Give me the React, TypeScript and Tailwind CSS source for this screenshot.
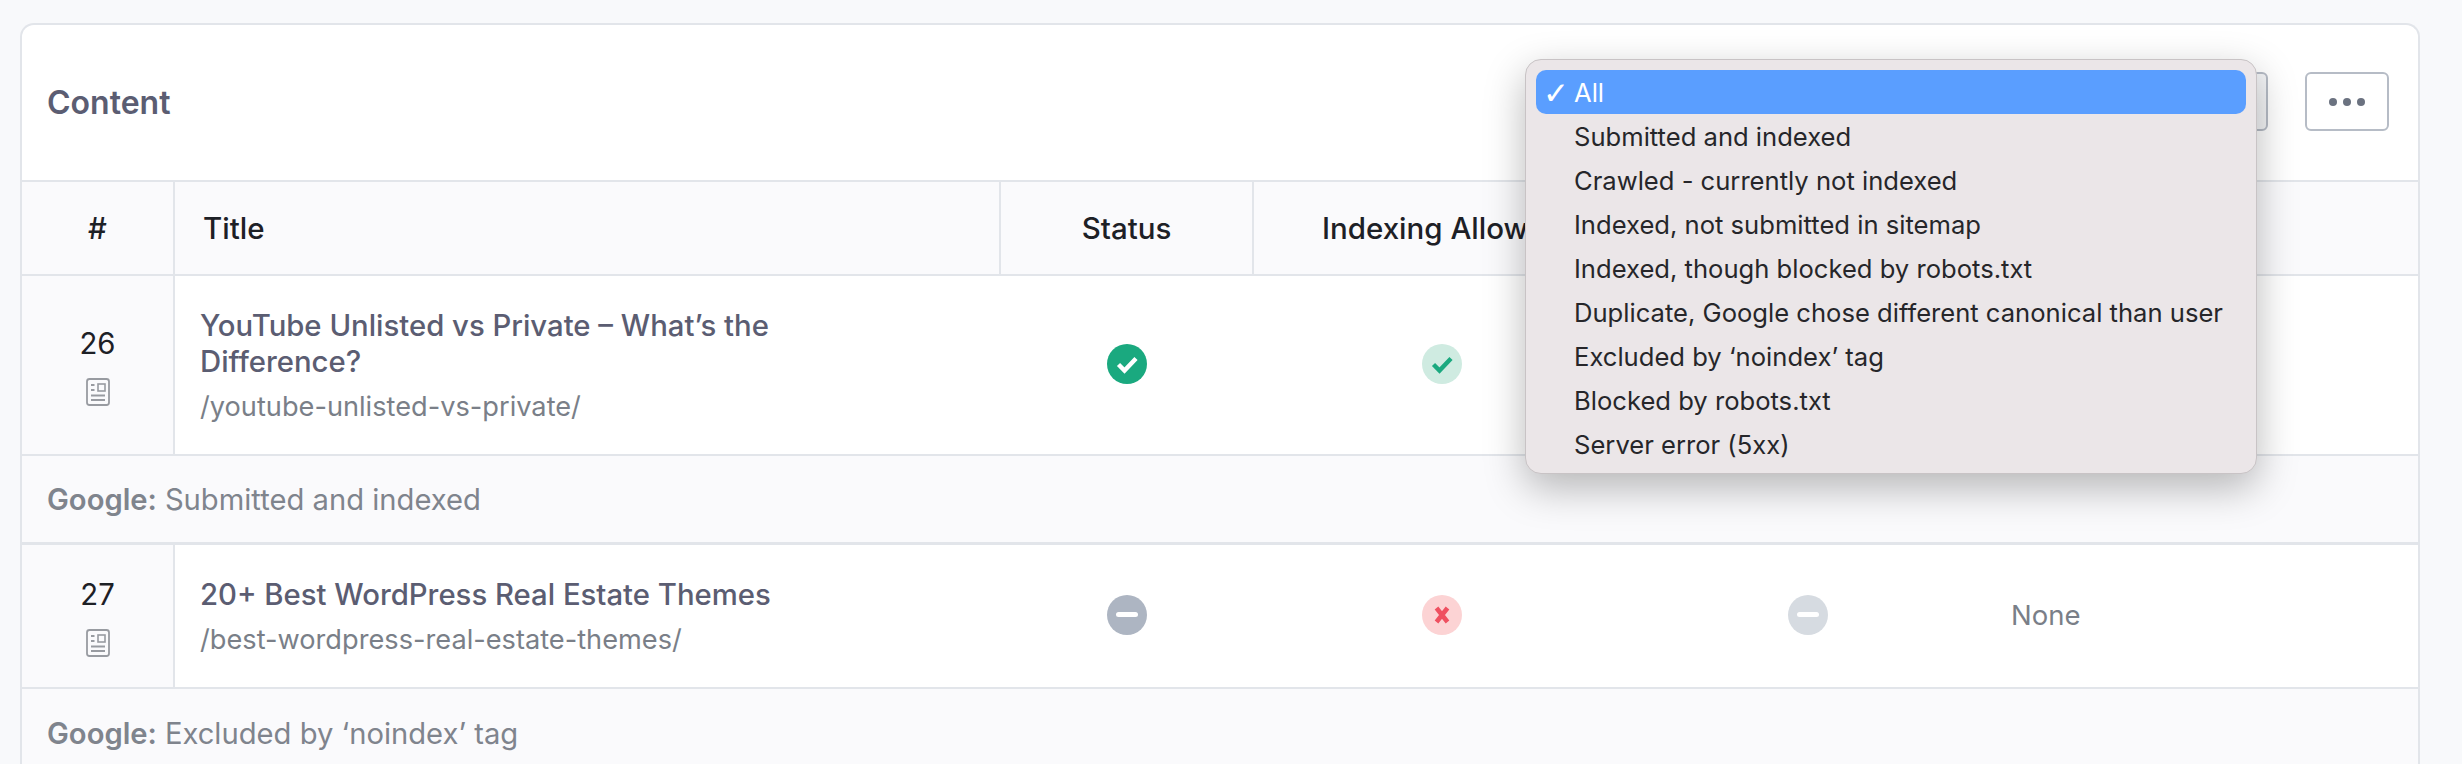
import React from 'react';

const options = [
  'Submitted and indexed',
  'Crawled - currently not indexed',
  'Indexed, not submitted in sitemap',
  'Indexed, though blocked by robots.txt',
  'Duplicate, Google chose different canonical than user',
  'Excluded by ‘noindex’ tag',
  'Blocked by robots.txt',
  'Server error (5xx)',
];

function DocIcon() {
  return (
    <svg width="26" height="30" viewBox="0 0 26 30" fill="none" stroke="#989ba1" strokeWidth="1.8">
      <rect x="2" y="2" width="22" height="26" rx="2.5" />
      <path d="M6 8h3.5M6 13h3.5M6 18.5h14M6 23h14" />
      <rect x="13" y="7" width="7" height="7" strokeWidth="1.6" />
    </svg>
  );
}

function Badge({ bg, kind, color }: { bg: string; kind: 'check' | 'minus' | 'x'; color: string }) {
  return (
    <svg width="40" height="40" viewBox="0 0 40 40" className="block">
      <circle cx="20" cy="20" r="20" fill={bg} />
      {kind === 'check' && <path d="M11.5 20.5l6 6L29 14.5" fill="none" stroke={color} strokeWidth="4.4" />}
      {kind === 'minus' && <path d="M11.5 19.5h17" fill="none" stroke={color} strokeWidth="5" strokeLinecap="round" />}
      {kind === 'x' && <path d="M14.5 13l11 14M25.5 13l-11 14" fill="none" stroke={color} strokeWidth="4.6" />}
    </svg>
  );
}

const gridCols = 'grid grid-cols-[153px_826px_253px_375px_358px_1fr]';

function DataRow({
  num,
  title,
  url,
  icons,
  none,
}: {
  num: string;
  title: React.ReactNode;
  url: string;
  icons: React.ReactNode[];
  none?: boolean;
}) {
  return (
    <div className={gridCols}>
      <div className="flex flex-col items-center justify-center gap-[15px] border-r-2 border-[#e2e5ea] bg-[#fafafc] pt-[2px] text-[29.3px] leading-9 text-[#1d2026]">
        <span>{num}</span>
        <DocIcon />
      </div>
      <div className="pt-[32px] pb-[29px] pl-[25px] pr-[100px]">
        <div className="text-[29.3px] leading-9 font-medium text-[#5b5d72]">{title}</div>
        <div className="mt-[9px] text-[27.2px] leading-9 text-[#7a7f88]">{url}</div>
      </div>
      <div className="flex items-center justify-center pb-[2px] pr-[2px]">{icons[0]}</div>
      <div className="flex items-center justify-center pb-[2px]">{icons[1]}</div>
      <div className="flex items-center justify-center pb-[2px]">{icons[2]}</div>
      <div className="flex items-center pl-[24px] text-[27.5px] text-[#7a7f88]">{none ? 'None' : ''}</div>
    </div>
  );
}

function GoogleRow({ text, h }: { text: string; h: string }) {
  return (
    <div className={`flex items-center bg-[#fafafc] pl-[25px] pt-[2px] text-[29.2px] text-[#7f848d] ${h}`}>
      <span className="font-semibold">Google:</span>
      <span className="ml-[8px]">{text}</span>
    </div>
  );
}

export default function App() {
  return (
    <div
      className="h-[764px] overflow-hidden bg-[#f8f9fb] pt-[23px] pl-[20px] pr-[42px]"
      style={{ fontFamily: 'Inter, "Noto Sans", sans-serif' }}
    >
      <div className="relative rounded-t-[14px] border-x-2 border-t-2 border-[#e2e5ea] bg-white">
        {/* card header */}
        <div className="flex h-[155px] items-center justify-between pl-[25px] pr-[29px]">
          <h2 className="text-[32px] font-semibold text-[#5b5d72]">Content</h2>
          <div className="-mt-[2px] flex items-center gap-[37px]">
            <div className="h-[59px] w-[200px] rounded-[6px] border-2 border-[#b6bcc6] bg-[#f4f5f7]" />
            <div className="flex h-[59px] w-[84px] items-center justify-center gap-[6px] rounded-[6px] border-2 border-[#b6bcc6] bg-white">
              <span className="h-2 w-2 rounded-full bg-[#6b7280]" />
              <span className="h-2 w-2 rounded-full bg-[#6b7280]" />
              <span className="h-2 w-2 rounded-full bg-[#6b7280]" />
            </div>
          </div>
        </div>

        {/* table header */}
        <div className={`${gridCols} h-[96px] border-y-2 border-[#e2e5ea] bg-[#fafafc] pt-0 text-[29.5px] font-medium text-[#1d2026]`}>
          <div className="flex items-center justify-center border-r-2 border-[#e2e5ea] pt-[1px]">#</div>
          <div className="flex items-center border-r-2 border-[#e2e5ea] pl-[28px] pt-[1px]">Title</div>
          <div className="flex items-center justify-center border-r-2 border-[#e2e5ea] pt-[1px]">Status</div>
          <div className="flex items-center justify-center whitespace-nowrap pl-[2px] pt-[1px]">Indexing Allowed</div>
          <div />
          <div />
        </div>

        <DataRow
          num="26"
          title={<>YouTube Unlisted vs Private – What’s the Difference?</>}
          url="/youtube-unlisted-vs-private/"
          icons={[
            <Badge key="a" bg="#1aa97f" kind="check" color="#ffffff" />,
            <Badge key="b" bg="#cfebe1" kind="check" color="#1aa97f" />,
            <Badge key="c" bg="#cfebe1" kind="check" color="#1aa97f" />,
          ]}
        />
        <div className="border-t-2 border-[#e2e5ea]" />
        <GoogleRow text="Submitted and indexed" h="h-[86px]" />
        <div className="border-t-[3px] border-[#e2e5ea]" />
        <DataRow
          num="27"
          title="20+ Best WordPress Real Estate Themes"
          url="/best-wordpress-real-estate-themes/"
          none
          icons={[
            <Badge key="a" bg="#adb5c2" kind="minus" color="#ffffff" />,
            <Badge key="b" bg="#fcd3d4" kind="x" color="#ef5060" />,
            <Badge key="c" bg="#d6dbe1" kind="minus" color="#ffffff" />,
          ]}
        />
        <div className="border-t-2 border-[#e2e5ea]" />
        <GoogleRow text="Excluded by ‘noindex’ tag" h="h-[88px]" />

        {/* open select menu */}
        <div className="absolute top-[34px] left-[1503px] w-[732px] rounded-[16px] border border-[#c8c3c5] bg-[#ebe6e8] px-[10px] pt-[10px] pb-[7px] text-[25.6px] text-[#26262a] shadow-[0_14px_40px_rgba(0,0,0,0.28)]">
          <div className="flex h-[44px] items-center rounded-[10px] bg-[#5a9eff] pl-[7px] pt-[2px] text-white">
            <span className="w-[31px] text-[31px] leading-none" style={{ fontFamily: '"DejaVu Sans", sans-serif' }}>
              ✓
            </span>
            <span>All</span>
          </div>
          {options.map((o) => (
            <div key={o} className="flex h-[44px] items-center pl-[38px] pt-[2px]">
              {o}
            </div>
          ))}
        </div>
      </div>
    </div>
  );
}
